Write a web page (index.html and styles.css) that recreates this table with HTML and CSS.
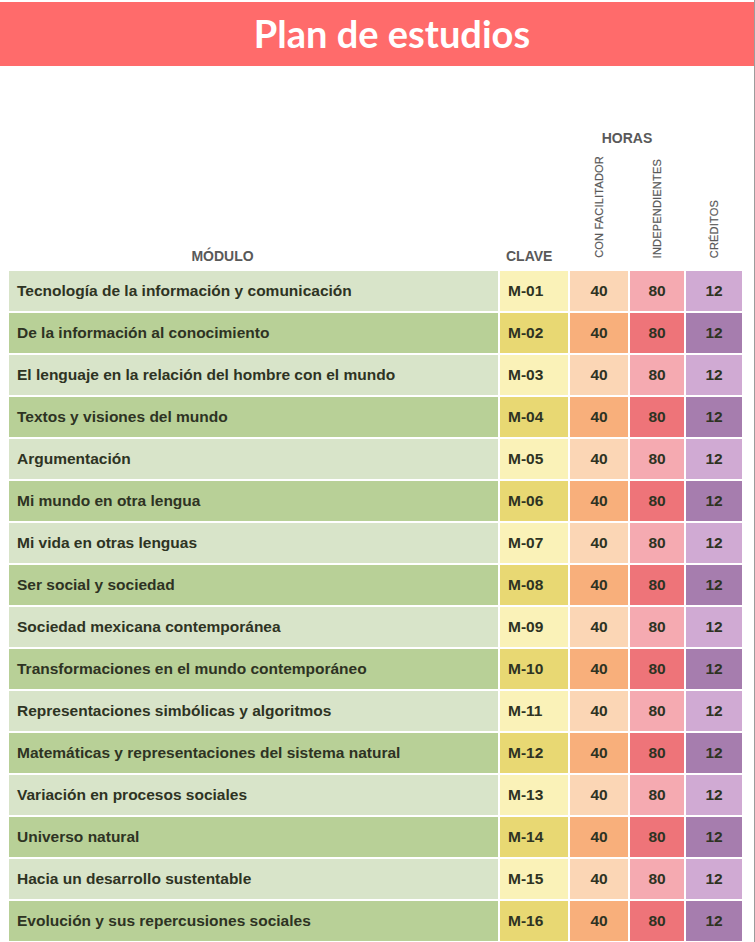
FILE: index.html
```html
<!DOCTYPE html>
<html lang="es">
<head>
    <meta charset="UTF-8">
    <meta name="viewport" content="width=device-width, initial-scale=1.0">
    <title>Plan de estudios</title>
    <link rel="stylesheet" href="styles.css">
</head>
<body>
    <div class="page">
        <header class="banner">
            <h1>Plan de estudios</h1>
        </header>

        <table class="plan">
            <colgroup>
                <col class="col-modulo">
                <col class="col-clave">
                <col class="col-fac">
                <col class="col-ind">
                <col class="col-cred">
            </colgroup>
            <thead>
                <tr class="head-top">
                    <th></th>
                    <th></th>
                    <th colspan="2" class="horas">HORAS</th>
                    <th></th>
                </tr>
                <tr class="head-main">
                    <th class="modulo-head">MÓDULO</th>
                    <th class="clave-head">CLAVE</th>
                    <th class="vert"><span>CON FACILITADOR</span></th>
                    <th class="vert"><span>INDEPENDIENTES</span></th>
                    <th class="vert"><span>CRÉDITOS</span></th>
                </tr>
            </thead>
            <tbody>
                <tr class="light"><td class="modulo">Tecnología de la información y comunicación</td><td class="clave">M-01</td><td class="fac">40</td><td class="ind">80</td><td class="cred">12</td></tr>
                <tr class="dark"><td class="modulo">De la información al conocimiento</td><td class="clave">M-02</td><td class="fac">40</td><td class="ind">80</td><td class="cred">12</td></tr>
                <tr class="light"><td class="modulo">El lenguaje en la relación del hombre con el mundo</td><td class="clave">M-03</td><td class="fac">40</td><td class="ind">80</td><td class="cred">12</td></tr>
                <tr class="dark"><td class="modulo">Textos y visiones del mundo</td><td class="clave">M-04</td><td class="fac">40</td><td class="ind">80</td><td class="cred">12</td></tr>
                <tr class="light"><td class="modulo">Argumentación</td><td class="clave">M-05</td><td class="fac">40</td><td class="ind">80</td><td class="cred">12</td></tr>
                <tr class="dark"><td class="modulo">Mi mundo en otra lengua</td><td class="clave">M-06</td><td class="fac">40</td><td class="ind">80</td><td class="cred">12</td></tr>
                <tr class="light"><td class="modulo">Mi vida en otras lenguas</td><td class="clave">M-07</td><td class="fac">40</td><td class="ind">80</td><td class="cred">12</td></tr>
                <tr class="dark"><td class="modulo">Ser social y sociedad</td><td class="clave">M-08</td><td class="fac">40</td><td class="ind">80</td><td class="cred">12</td></tr>
                <tr class="light"><td class="modulo">Sociedad mexicana contemporánea</td><td class="clave">M-09</td><td class="fac">40</td><td class="ind">80</td><td class="cred">12</td></tr>
                <tr class="dark"><td class="modulo">Transformaciones en el mundo contemporáneo</td><td class="clave">M-10</td><td class="fac">40</td><td class="ind">80</td><td class="cred">12</td></tr>
                <tr class="light"><td class="modulo">Representaciones simbólicas y algoritmos</td><td class="clave">M-11</td><td class="fac">40</td><td class="ind">80</td><td class="cred">12</td></tr>
                <tr class="dark"><td class="modulo">Matemáticas y representaciones del sistema natural</td><td class="clave">M-12</td><td class="fac">40</td><td class="ind">80</td><td class="cred">12</td></tr>
                <tr class="light"><td class="modulo">Variación en procesos sociales</td><td class="clave">M-13</td><td class="fac">40</td><td class="ind">80</td><td class="cred">12</td></tr>
                <tr class="dark"><td class="modulo">Universo natural</td><td class="clave">M-14</td><td class="fac">40</td><td class="ind">80</td><td class="cred">12</td></tr>
                <tr class="light"><td class="modulo">Hacia un desarrollo sustentable</td><td class="clave">M-15</td><td class="fac">40</td><td class="ind">80</td><td class="cred">12</td></tr>
                <tr class="dark"><td class="modulo">Evolución y sus repercusiones sociales</td><td class="clave">M-16</td><td class="fac">40</td><td class="ind">80</td><td class="cred">12</td></tr>
            </tbody>
        </table>
    </div>
</body>
</html>
```

FILE: styles.css
```css
body {
    margin: 0;
    padding: 0;
    background-color: #fff;
    font-family: "Liberation Sans", Arial, sans-serif;
}

.page {
    width: 754px;
    height: 942px;
    border-right: 1px solid #9c9c9c;
    overflow: hidden;
}

.banner {
    margin-top: 2px;
    height: 64px;
    background-color: #ff6b6b;
    display: flex;
    justify-content: center;
    align-items: center;
}

.banner h1 {
    margin: 0;
    padding-left: 30px;
    padding-bottom: 2px;
    color: #fff;
    font-family: "Lato", sans-serif;
    font-weight: 700;
    font-size: 38px;
}

.plan {
    margin-left: 7px;
    margin-top: 56px;
    border-collapse: separate;
    border-spacing: 2px;
    table-layout: fixed;
    width: 737px;
}

.col-modulo { width: 489px; }
.col-clave { width: 68px; }
.col-fac { width: 58px; }
.col-ind { width: 54px; }
.col-cred { width: 56px; }

.plan th {
    color: #595959;
    font-weight: bold;
    padding: 0;
}

.head-top th {
    height: 28px;
}

.horas {
    font-size: 14px;
    text-align: center;
    vertical-align: middle;
}

.head-main th {
    height: 107px;
    vertical-align: bottom;
    font-size: 14px;
    padding-bottom: 5px;
}

.modulo-head {
    text-align: center;
    padding-right: 62px !important;
}

.clave-head {
    text-align: left;
    padding-left: 6px !important;
}

.head-main .vert {
    padding-bottom: 8px;
    text-align: center;
}

.vert span {
    display: inline-block;
    writing-mode: vertical-rl;
    transform: rotate(180deg);
    font-size: 11px;
    font-weight: normal;
    letter-spacing: 0.2px;
    -webkit-text-stroke: 0.2px #595959;
}

.plan td {
    height: 40px;
    padding: 0;
    font-size: 15.5px;
    font-weight: bold;
    color: #2e3323;
}

.plan td.modulo {
    padding-left: 8px;
}

.plan td.clave {
    padding-left: 8px;
}

.plan td.fac,
.plan td.ind,
.plan td.cred {
    text-align: center;
}

.light .modulo { background-color: #d8e4c9; }
.light .clave { background-color: #faf2b8; }
.light .fac { background-color: #fbd6b5; }
.light .ind { background-color: #f5aab1; }
.light .cred { background-color: #d0aad3; }

.dark .modulo { background-color: #b8d097; }
.dark .clave { background-color: #e8d873; }
.dark .fac { background-color: #f8af7b; }
.dark .ind { background-color: #ee7479; }
.dark .cred { background-color: #a67dae; }
```
